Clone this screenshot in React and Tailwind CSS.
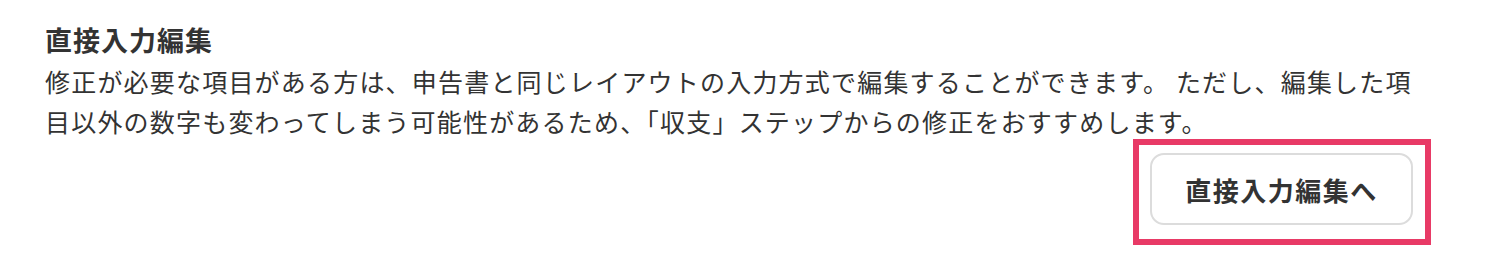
import React from "react";

const DirectEditSection = () => {
  return (
    <div
      className="w-[1508px] h-[274px] bg-white text-[#333] px-[45px] pt-[22px]"
      style={{ fontFamily: '"Noto Sans CJK JP", "Noto Sans", sans-serif' }}
    >
      <h2 className="text-[27px] leading-[36px] font-bold tracking-[1px]">直接入力編集</h2>
      <p className="mt-[3px] w-[1372px] text-[25px] leading-[40px] tracking-[1.2px]">
        修正が必要な項目がある方は、申告書と同じレイアウトの入力方式で編集することができます。 ただし、編集した項目以外の数字も変わってしまう可能性があるため、「収支」ステップからの修正をおすすめします。
      </p>
      <div className="flex justify-end pr-[50px] mt-[12px]">
        <div className="relative">
          <button className="w-[263px] h-[72px] rounded-[14px] border-2 border-[#dcdcdc] bg-white text-[26px] font-bold tracking-[1.5px] text-[#333]">
            直接入力編集へ
          </button>
          <div className="absolute -left-[17px] -top-[14px] -right-[18px] -bottom-[20px] border-[6px] border-[#e83a66] pointer-events-none" />
        </div>
      </div>
    </div>
  );
};

const App = () => {
  return <DirectEditSection />;
};

export default App;
